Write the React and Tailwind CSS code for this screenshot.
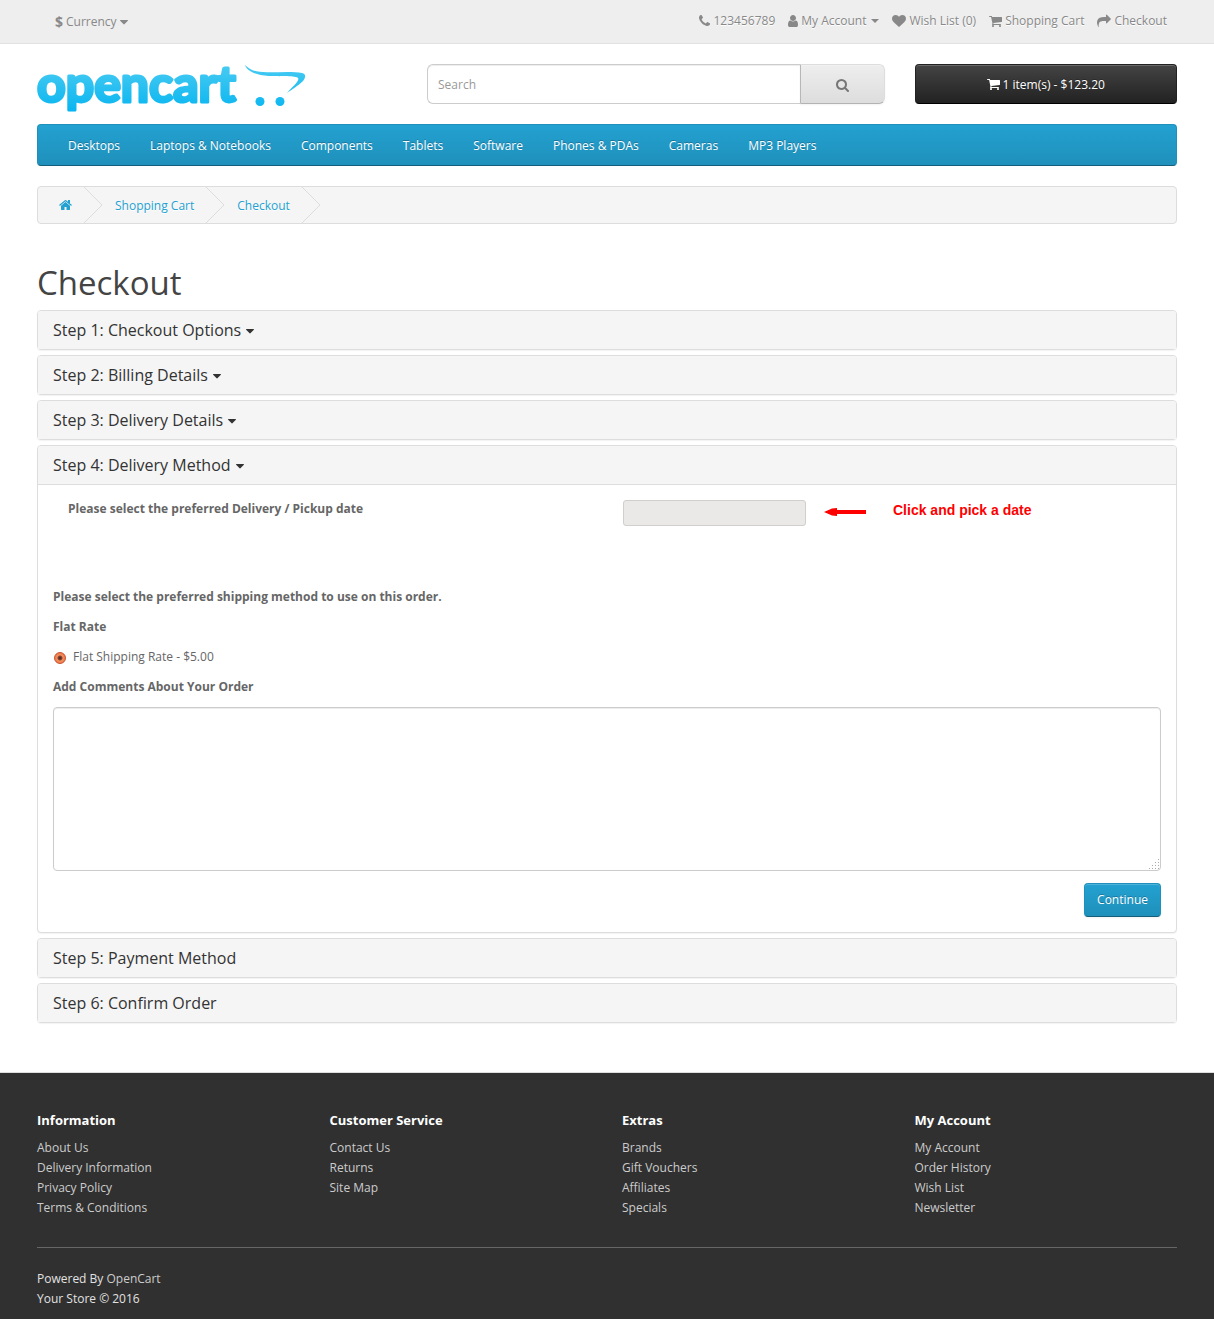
const glyphs = {
  caret: {
    x: 384,
    w: 1024,
    d: 'M1408 704q0 26-19 45l-448 448q-19 19-45 19t-45-19l-448-448q-19-19-19-45t19-45 45-19h896q26 0 45 19t19 45z',
  },
  phone: {
    x: 192,
    w: 1408,
    d: 'M1600 1240q0 27-10 70.5t-21 68.5q-21 50-122 106-94 51-186 51-27 0-53-3.5t-57.5-12.5-47-14.5-55.5-20.5-49-18q-98-35-175-83-127-79-264-216t-216-264q-48-77-83-175-3-9-18-49t-20.5-55.5-14.5-47-12.5-57.5-3.5-53q0-92 51-186 56-101 106-122 25-11 68.5-21t70.5-10q14 0 21 3 18 6 53 76 11 19 30 54t35 63.5 31 53.5q3 4 17.5 25t21.5 35.5 7 28.5q0 20-28.5 50t-62 55-62 53-28.5 46q0 9 5 22.5t8.5 20.5 14 24 11.5 19q76 137 174 235t235 174q2 1 19 11.5t24 14 20.5 8.5 22.5 5q18 0 46-28.5t53-62 55-62 50-28.5q14 0 28.5 7t35.5 21.5 25 17.5q25 15 53.5 31t63.5 35 54 30q70 35 76 53 3 7 3 21z',
  },
  user: {
    x: 256,
    w: 1280,
    d: 'M1536 1399q0 109-62.5 187t-150.5 78h-854q-88 0-150.5-78t-62.5-187q0-85 8.5-160.5t31.5-152 58.5-131 94-89 134.5-34.5q131 128 313 128t313-128q76 0 134.5 34.5t94 89 58.5 131 31.5 152 8.5 160.5zm-256-887q0 159-112.5 271.5t-271.5 112.5-271.5-112.5-112.5-271.5 112.5-271.5 271.5-112.5 271.5 112.5 112.5 271.5z',
  },
  heart: {
    x: 0,
    w: 1792,
    d: 'M896 1664q-26 0-44-18l-624-602q-10-8-27.5-26t-55.5-65.5-68-97.5-53.5-121-23.5-138q0-220 127-344t351-124q62 0 126.5 21.5t120 58 95.5 68.5 76 68q36-36 76-68t95.5-68.5 120-58 126.5-21.5q224 0 351 124t127 344q0 221-229 450l-623 600q-18 18-44 18z',
  },
  cart: {
    x: 64,
    w: 1664,
    d: 'M704 1536q0 52-38 90t-90 38-90-38-38-90 38-90 90-38 90 38 38 90zm896 0q0 52-38 90t-90 38-90-38-38-90 38-90 90-38 90 38 38 90zm128-1088v512q0 24-16.5 42.5t-40.5 21.5l-1044 122q13 60 13 70 0 16-24 64h920q26 0 45 19t19 45-19 45-45 19h-1024q-26 0-45-19t-19-45q0-11 8-31.5t16-36 21.5-40 15.5-29.5l-177-823h-204q-26 0-45-19t-19-45 19-45 45-19h256q16 0 28.5 6.5t19.5 15.5 13 24.5 8 26 5.5 29.5 4.5 26h1201q26 0 45 19t19 45z',
  },
  share: {
    x: 0,
    w: 1792,
    d: 'M1792 640q0 26-19 45l-512 512q-19 19-45 19t-45-19-19-45v-256h-224q-98 0-175.5 6t-154 21.5-133 42.5-105.5 69.5-80 101-48.5 138.5-17.5 181q0 55 5 123 0 6 2.5 23.5t2.5 26.5q0 15-8.5 25t-23.5 10q-16 0-28-17-7-9-13-22t-13.5-30-10.5-24q-127-285-127-451 0-199 53-333 162-403 875-403h224v-256q0-26 19-45t45-19 45 19l512 512q19 19 19 45z',
  },
  search: {
    x: 64,
    w: 1664,
    d: 'M1216 832q0-185-131.5-316.5t-316.5-131.5-316.5 131.5-131.5 316.5 131.5 316.5 316.5 131.5 316.5-131.5 131.5-316.5zm512 832q0 52-38 90t-90 38q-54 0-90-38l-343-342q-179 124-399 124-143 0-273.5-55.5t-225-150-150-225-55.5-273.5 55.5-273.5 150-225 225-150 273.5-55.5 273.5 55.5 225 150 150 225 55.5 273.5q0 220-124 399l343 343q37 37 37 90z',
  },
  home: {
    x: 64,
    w: 1664,
    d: 'M1472 992v480q0 26-19 45t-45 19h-384v-384h-256v384h-384q-26 0-45-19t-19-45v-480q0-1 .5-3t.5-3l575-474 575 474q1 2 1 6zm223-69l-62 74q-8 9-21 11h-3q-13 0-21-7l-692-577-692 577q-12 8-24 7-13-2-21-11l-62-74q-8-10-7-23.5t11-21.5l719-599q32-26 76-26t76 26l244 204v-195q0-14 9-23t23-9h192q14 0 23 9t9 23v408l219 182q10 8 11 21.5t-7 23.5z',
  },
};

function Icon({ name, className = '' }) {
  const g = glyphs[name];
  return (
    <svg
      aria-hidden="true"
      viewBox={`${g.x} 0 ${g.w} 1792`}
      className={`h-3.5 w-auto shrink-0 overflow-visible fill-current ${className}`}
    >
      <path d={g.d} />
    </svg>
  );
}

function Logo() {
  return (
    <svg role="img" aria-label="opencart" viewBox="0 0 269 60" className="block h-[60px] w-[269px] overflow-visible">
      <defs>
        <linearGradient id="logo" gradientUnits="userSpaceOnUse" x1="0" y1="0" x2="0" y2="50">
          <stop offset="0" stopColor="#4acbf2" />
          <stop offset="1" stopColor="#04b4f0" />
        </linearGradient>
      </defs>
      <g fill="url(#logo)">
        <text
          x="0"
          y="38"
          fontFamily="Lato, sans-serif"
          fontWeight="700"
          fontSize="50"
          stroke="url(#logo)"
          strokeWidth="3"
          strokeLinejoin="round"
        >
          opencart
        </text>
        <path d="M208 1 C213 6 218 8 230 8.200 C242 8.300 256 7 265 9 C269 10 269 13 266 17 C262 21 254 26 250 29 C255 23 263 17 261 14 C259 11.500 244 12.500 232 12 C218 11 210 7 208 1 Z" />
        <circle cx="223" cy="37.500" r="4.500" />
        <circle cx="243" cy="37.500" r="4.500" />
      </g>
    </svg>
  );
}

const wrap = 'mx-auto w-full max-w-[1170px] px-[15px]';

const topLinks = [
  { icon: 'phone', label: '123456789' },
  { icon: 'user', label: 'My Account', menu: true },
  { icon: 'heart', label: 'Wish List (0)' },
  { icon: 'cart', label: 'Shopping Cart' },
  { icon: 'share', label: 'Checkout' },
];

const categories = [
  'Desktops',
  'Laptops & Notebooks',
  'Components',
  'Tablets',
  'Software',
  'Phones & PDAs',
  'Cameras',
  'MP3 Players',
];

const footerColumns = [
  { title: 'Information', links: ['About Us', 'Delivery Information', 'Privacy Policy', 'Terms & Conditions'] },
  { title: 'Customer Service', links: ['Contact Us', 'Returns', 'Site Map'] },
  { title: 'Extras', links: ['Brands', 'Gift Vouchers', 'Affiliates', 'Specials'] },
  { title: 'My Account', links: ['My Account', 'Order History', 'Wish List', 'Newsletter'] },
];

function TopBar() {
  return (
    <nav className="border-b border-[#e2e2e2] bg-[#eeeeee] text-[#888888] [text-shadow:0_1px_0_#fff]">
      <div className={wrap}>
        <div className="flex h-[43px] items-center justify-between pr-2.5 pl-[18px]">
          <button type="button" className="flex items-center gap-[3px]">
            <strong className="text-sm leading-5">$</strong>
            <span>Currency</span>
            <Icon name="caret" />
          </button>
          <ul className="flex gap-[13px] pb-0.5">
            {topLinks.map((l) => (
              <li key={l.label}>
                <a href="#" className="flex items-center gap-[3px]">
                  <Icon name={l.icon} />
                  <span>{l.label}</span>
                  {l.menu && (
                    <span className="ml-0.5 border-x-4 border-t-4 border-x-transparent border-t-current" />
                  )}
                </a>
              </li>
            ))}
          </ul>
        </div>
      </div>
    </nav>
  );
}

function Header() {
  return (
    <header className={`${wrap} mt-5 grid grid-cols-12 gap-x-[30px]`}>
      <a href="#" className="col-span-4 h-[60px]">
        <Logo />
      </a>
      <form className="col-span-5 flex h-10">
        <input
          type="text"
          aria-label="Search"
          placeholder="Search"
          className="min-w-0 flex-1 rounded-l-md border border-r-0 border-[#cccccc] px-2.5 pt-0.5 shadow-[inset_0_1px_1px_rgba(0,0,0,0.075)] outline-none placeholder:text-[#999999]"
        />
        <button
          type="button"
          aria-label="Search"
          className="flex w-[85px] items-center justify-center rounded-r-md border border-t-[#dddddd] border-r-[#dddddd] border-b-[#b3b3b3] border-l-[#b7b7b7] bg-linear-to-b from-[#eeeeee] to-[#dddddd] pt-0.5 text-[#777777] shadow-[inset_0_1px_0_rgba(255,255,255,0.2),0_1px_2px_rgba(0,0,0,0.05)]"
        >
          <Icon name="search" />
        </button>
      </form>
      <button
        type="button"
        className="col-span-3 flex h-10 items-center justify-center gap-[3px] rounded border border-[#222222] border-b-black bg-linear-to-b from-[#444444] to-[#222222] text-white shadow-[inset_0_1px_0_rgba(255,255,255,0.2)] [text-shadow:0_-1px_0_rgba(0,0,0,0.25)]"
      >
        <Icon name="cart" />
        <span className="pt-0.5">1 item(s) - $123.20</span>
      </button>
    </header>
  );
}

function Menu() {
  return (
    <nav className="rounded border border-[#1f90bb] border-b-[#145e7a] bg-linear-to-b from-[#23a1d1] to-[#1f90bb] px-[15px]">
      <ul className="flex">
        {categories.map((c) => (
          <li key={c}>
            <a href="#" className="block px-[15px] pt-[11px] pb-[9px] text-white [text-shadow:0_-1px_0_rgba(0,0,0,0.25)]">
              {c}
            </a>
          </li>
        ))}
      </ul>
    </nav>
  );
}

function Chevron() {
  return (
    <svg aria-hidden="true" viewBox="0 0 19 36" className="h-9 w-[19px] fill-none stroke-[#dddddd]">
      <path d="M0 0 L18 18 L0 36" />
    </svg>
  );
}

function Breadcrumb() {
  return (
    <ul className="mt-5 flex h-[38px] items-center gap-3 overflow-hidden rounded border border-[#dddddd] bg-[#f5f5f5] pl-[21px] text-[#23a1d1] [text-shadow:0_1px_0_#fff]">
      <li className="flex items-center gap-3">
        <a href="#" aria-label="Home">
          <Icon name="home" />
        </a>
        <Chevron />
      </li>
      <li className="flex items-center gap-3">
        <a href="#" className="pt-0.5">
          Shopping Cart
        </a>
        <Chevron />
      </li>
      <li className="flex items-center gap-3">
        <a href="#" className="pt-0.5">
          Checkout
        </a>
        <Chevron />
      </li>
    </ul>
  );
}

function Panel({ title, caret, children }) {
  return (
    <section className="rounded border border-[#dddddd] bg-white shadow-[0_1px_1px_rgba(0,0,0,0.05)]">
      <h4 className="rounded-t-[3px] bg-[#f5f5f5] px-[15px] py-2.5 text-base leading-[18px] text-[#333333]">
        {caret ? (
          <a href="#" className="inline-flex items-center gap-[5px]">
            {title}
            <Icon name="caret" className="mt-0.5" />
          </a>
        ) : (
          title
        )}
      </h4>
      {children}
    </section>
  );
}

function DeliveryMethod() {
  return (
    <form className="border-t border-[#dddddd] px-[15px] pt-3.5 pb-[15px]">
      <div className="grid h-[88px] grid-cols-2 items-start">
        <label htmlFor="delivery-date" className="pl-[15px] font-bold">
          Please select the preferred Delivery / Pickup date
        </label>
        <div className="flex items-center pt-px pl-4">
          <input
            id="delivery-date"
            type="text"
            readOnly
            className="h-[26px] w-[183px] rounded-[3px] border border-[#d1cecb] bg-[#ebe9e8] px-2"
          />
          <svg aria-hidden="true" viewBox="0 0 42 12" className="ml-[18px] h-3 w-[42px] fill-[#ff0000]">
            <path d="M0 5 L8 1.500 L13 1 L13 3 L42 3 L42 7 L13 7 L13 9 L8 8.500 Z" />
          </svg>
          <span className="ml-[27px] pb-1.5 font-['Liberation_Sans',sans-serif] text-sm font-bold text-[#ff0000]">
            Click and pick a date
          </span>
        </div>
      </div>
      <div className="flex flex-col gap-2.5">
        <p className="font-bold">Please select the preferred shipping method to use on this order.</p>
        <p className="font-bold">Flat Rate</p>
        <label className="flex items-center gap-[7px]">
          <input
            type="radio"
            name="shipping"
            defaultChecked
            className="mt-0.5 ml-px size-3 appearance-none rounded-full border border-[#c9522b] bg-[radial-gradient(circle,#5c2f22_0_1px,#8d4a35_2px,#f4915f_3px,#ee7a4c_5px)]"
          />
          Flat Shipping Rate - $5.00
        </label>
        <label htmlFor="comments" className="font-bold">
          Add Comments About Your Order
        </label>
        <div className="relative">
          <textarea
            id="comments"
            className="block h-[164px] w-full resize-y rounded border border-[#cccccc] px-2.5 py-2 shadow-[inset_0_1px_1px_rgba(0,0,0,0.075)] outline-none [&::-webkit-resizer]:bg-transparent"
          />
          <svg
            aria-hidden="true"
            viewBox="0 0 10 10"
            className="pointer-events-none absolute right-0.5 bottom-0.5 size-2.5 fill-[#aaaaaa]"
          >
            <path d="M0 9h1v1h-1zM3 9h1v1h-1zM6 9h1v1h-1zM9 9h1v1h-1zM3 6h1v1h-1zM6 6h1v1h-1zM9 6h1v1h-1zM6 3h1v1h-1zM9 3h1v1h-1zM9 0h1v1h-1z" />
          </svg>
        </div>
      </div>
      <div className="mt-3 flex justify-end">
        <button
          type="button"
          className="h-[34px] rounded border border-[#1f90bb] border-b-[#145e7a] bg-linear-to-b from-[#23a1d1] to-[#1f90bb] px-3 text-white shadow-[inset_0_1px_0_rgba(255,255,255,0.2),0_1px_2px_rgba(0,0,0,0.05)] [text-shadow:0_-1px_0_rgba(0,0,0,0.25)]"
        >
          Continue
        </button>
      </div>
    </form>
  );
}

function Footer() {
  return (
    <footer className="mt-[49px] border-t border-[#dddddd] bg-[#303030] pt-10 pb-2.5 text-[#e2e2e2]">
      <div className={wrap}>
        <div className="grid grid-cols-4 gap-[30px]">
          {footerColumns.map((col) => (
            <div key={col.title}>
              <h5 className="mb-[11px] text-[13px] leading-3.5 font-bold text-white">{col.title}</h5>
              <ul>
                {col.links.map((l) => (
                  <li key={l}>
                    <a href="#" className="text-[#cccccc]">
                      {l}
                    </a>
                  </li>
                ))}
              </ul>
            </div>
          ))}
        </div>
        <hr className="mt-[29px] mb-[21px] border-[#666666]" />
        <p>
          Powered By{' '}
          <a href="#" className="text-[#cccccc]">
            OpenCart
          </a>
          <br />
          Your Store © 2016
        </p>
      </div>
    </footer>
  );
}

export default function App() {
  return (
    <div className="bg-white font-['Open_Sans',sans-serif] text-xs leading-5 text-[#666666]">
      <TopBar />
      <Header />
      <main className={wrap}>
        <Menu />
        <Breadcrumb />
        <h1 className="mt-[41px] mb-[9px] text-[33px] leading-9 text-[#444444]">Checkout</h1>
        <div className="flex flex-col gap-[5px]">
          <Panel title="Step 1: Checkout Options" caret />
          <Panel title="Step 2: Billing Details" caret />
          <Panel title="Step 3: Delivery Details" caret />
          <Panel title="Step 4: Delivery Method" caret>
            <DeliveryMethod />
          </Panel>
          <Panel title="Step 5: Payment Method" />
          <Panel title="Step 6: Confirm Order" />
        </div>
      </main>
      <Footer />
    </div>
  );
}
